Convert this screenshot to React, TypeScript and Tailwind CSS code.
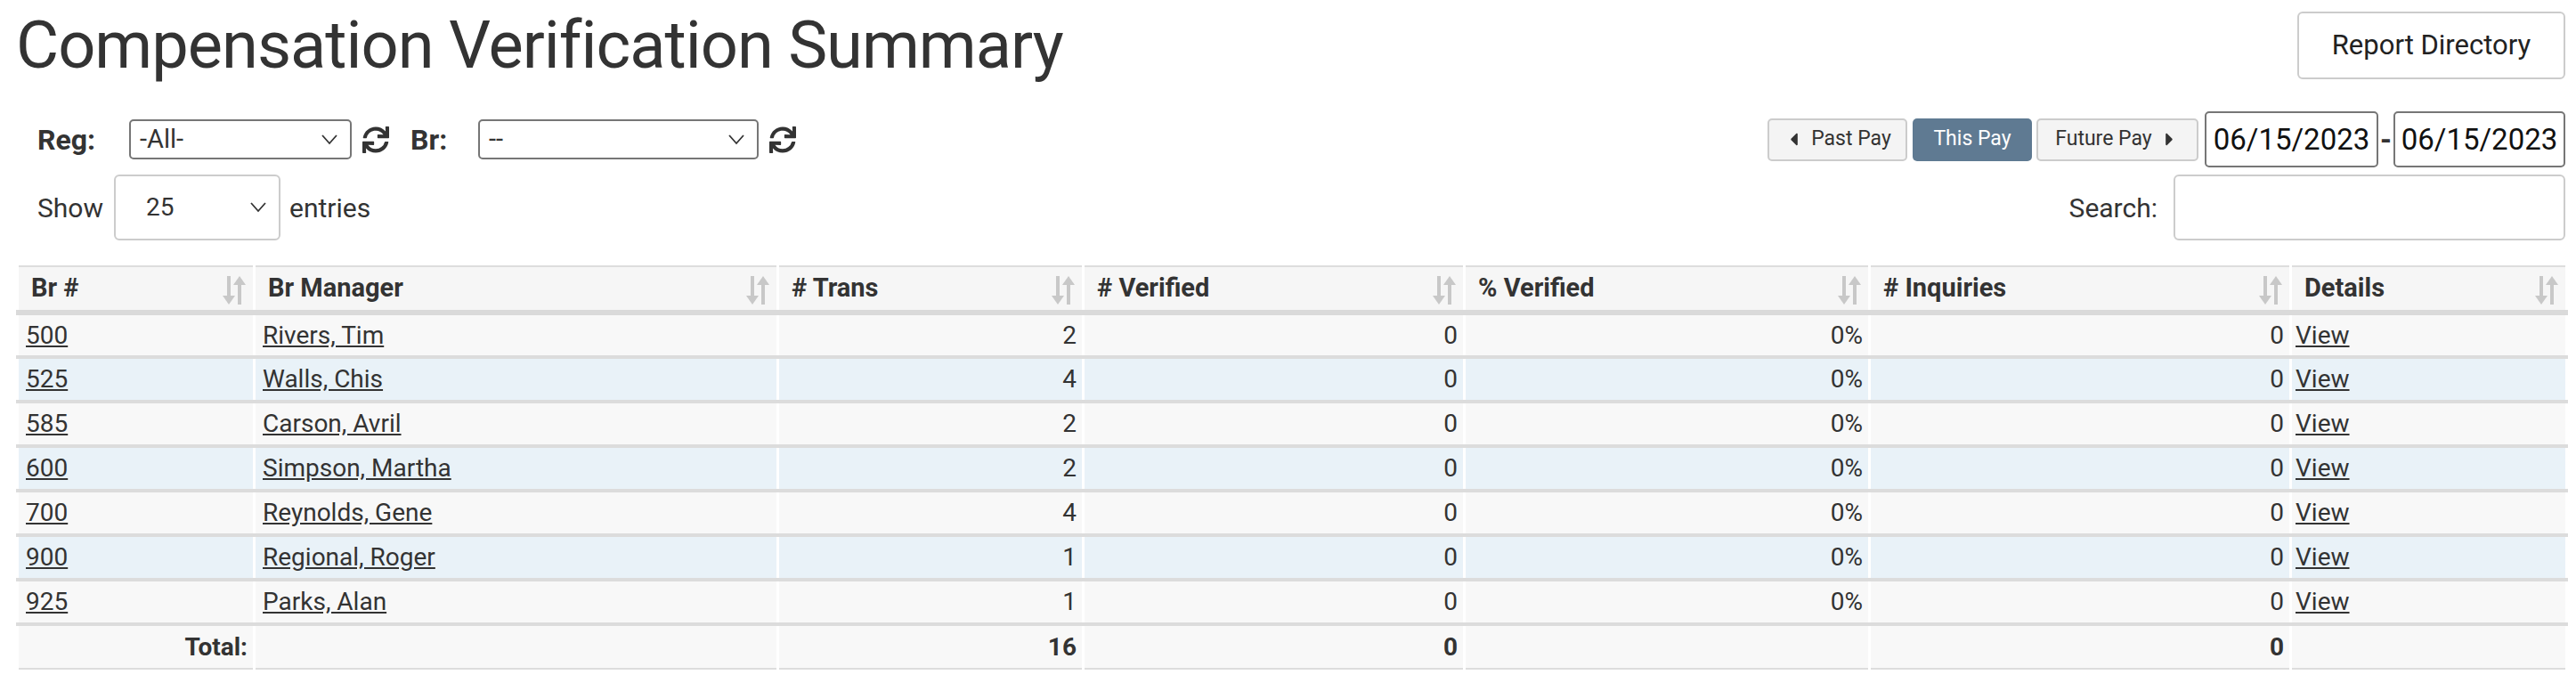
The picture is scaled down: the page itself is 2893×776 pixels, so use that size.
import React from "react";
import { FaSync, FaCaretLeft, FaCaretRight } from "react-icons/fa";

const rows = [
  ["500", "Rivers, Tim", "2"],
  ["525", "Walls, Chis", "4"],
  ["585", "Carson, Avril", "2"],
  ["600", "Simpson, Martha", "2"],
  ["700", "Reynolds, Gene", "4"],
  ["900", "Regional, Roger", "1"],
  ["925", "Parks, Alan", "1"],
];

const cols = [
  { t: "Br #", w: 266 },
  { t: "Br Manager", w: 588 },
  { t: "# Trans", w: 343 },
  { t: "# Verified", w: 428 },
  { t: "% Verified", w: 455 },
  { t: "# Inquiries", w: 473 },
  { t: "Details", w: 310 },
];

function SortIcon() {
  return (
    <svg width="26" height="36" viewBox="0 0 26 36" className="absolute right-[8px] top-[8px]">
      <g fill="#c8c8c8">
        <rect x="5" y="2" width="4" height="24" />
        <polygon points="0,24 14,24 7,34" />
        <rect x="17" y="10" width="4" height="24" />
        <polygon points="12,12 26,12 19,2" />
      </g>
    </svg>
  );
}

function Chevron() {
  return (
    <svg width="18" height="12" viewBox="0 0 18 12" className="absolute right-[14px] top-1/2 -translate-y-1/2">
      <path d="M1 1 L9 10 L17 1" fill="none" stroke="#333" strokeWidth="1.8" />
    </svg>
  );
}

export default function App() {
  const font = { fontFamily: "Roboto, 'Open Sans', sans-serif" };
  return (
    <div className="w-[2893px] h-[776px] bg-white text-[#333] overflow-hidden" style={font}>
      <div className="flex justify-between items-start">
        <h1 className="text-[74px] leading-none pl-[18px] pt-[14px] text-[#333] tracking-[-1px]">
          Compensation Verification Summary
        </h1>
        <button className="mt-[13px] mr-[12px] w-[301px] h-[76px] border-2 border-[#ccc] rounded-[6px] text-[31px] text-[#222] bg-white">
          Report Directory
        </button>
      </div>

      <div className="flex justify-between items-center mt-[36px] h-[63px]">
        <div className="flex items-center pl-[42px] text-[32px]">
          <span className="font-bold w-[103px]">Reg:</span>
          <div className="relative w-[250px] h-[45px] border-2 border-[#767676] rounded-[5px] flex items-center px-[10px] text-[29px]">
            -All-
            <Chevron />
          </div>
          <FaSync className="ml-[12px] text-[30px] text-[#333]" />
          <span className="font-bold ml-[24px] w-[76px]">Br:</span>
          <div className="relative w-[315px] h-[45px] border-2 border-[#767676] rounded-[5px] flex items-center px-[10px] text-[29px]">
            --
            <Chevron />
          </div>
          <FaSync className="ml-[12px] text-[30px] text-[#333]" />
        </div>
        <div className="flex items-center mr-[12px]">
          <button className="w-[157px] h-[48px] border-2 border-[#ccc] rounded-[5px] bg-[#f4f4f4] text-[23px] flex items-center justify-center gap-[8px] text-[#333]">
            <FaCaretLeft /> Past Pay
          </button>
          <button className="ml-[6px] w-[134px] h-[48px] rounded-[5px] bg-[#5f7a92] text-white text-[23px]">
            This Pay
          </button>
          <button className="ml-[5px] w-[182px] h-[48px] border-2 border-[#ccc] rounded-[5px] bg-[#f4f4f4] text-[23px] flex items-center justify-center gap-[8px] text-[#333]">
            Future Pay <FaCaretRight />
          </button>
          <div className="ml-[7px] w-[195px] h-[63px] border-2 border-[#767676] rounded-[5px] flex items-center justify-center text-[33px] text-[#111]">
            06/15/2023
          </div>
          <span className="text-[33px] font-bold mx-[2px]">-</span>
          <div className="w-[193px] h-[63px] border-2 border-[#767676] rounded-[5px] flex items-center justify-center text-[33px] text-[#111]">
            06/15/2023
          </div>
        </div>
      </div>

      <div className="flex justify-between items-center mt-[8px] h-[74px] text-[30px]">
        <div className="flex items-center pl-[42px]">
          <span>Show</span>
          <div className="relative ml-[12px] w-[187px] h-[74px] border-2 border-[#ccc] rounded-[6px] flex items-center pl-[34px] text-[28px]">
            25
            <Chevron />
          </div>
          <span className="ml-[10px]">entries</span>
        </div>
        <div className="flex items-center mr-[12px]">
          <span>Search:</span>
          <div className="ml-[18px] w-[440px] h-[74px] border-2 border-[#ccc] rounded-[6px]" />
        </div>
      </div>

      <table className="ml-[18px] mt-[28px] border-collapse border-2 border-[#ddd] text-[28px] table-fixed" style={{ width: 2863 }}>
        <colgroup>
          {cols.map((c) => (
            <col key={c.t} style={{ width: c.w }} />
          ))}
        </colgroup>
        <thead>
          <tr className="h-[52px] bg-[#f6f6f6]">
            {cols.map((c) => (
              <th key={c.t} className="relative text-left font-bold text-[29px] px-[14px] border-x-[3px] border-white border-b-[6px] border-b-[#dadada]">
                {c.t}
                <SortIcon />
              </th>
            ))}
          </tr>
        </thead>
        <tbody>
          {rows.map((r, i) => (
            <tr key={r[0]} className={`h-[50px] ${i % 2 ? "bg-[#e9f2f8]" : "bg-[#f8f8f8]"}`}>
              <td className="px-[8px] border-x-[3px] border-white border-b-[4px] border-b-[#dcdcdc]"><a className="underline">{r[0]}</a></td>
              <td className="px-[8px] border-x-[3px] border-white border-b-[4px] border-b-[#dcdcdc]"><a className="underline">{r[1]}</a></td>
              <td className="px-[6px] text-right border-x-[3px] border-white border-b-[4px] border-b-[#dcdcdc]">{r[2]}</td>
              <td className="px-[6px] text-right border-x-[3px] border-white border-b-[4px] border-b-[#dcdcdc]">0</td>
              <td className="px-[6px] text-right border-x-[3px] border-white border-b-[4px] border-b-[#dcdcdc]">0%</td>
              <td className="px-[6px] text-right border-x-[3px] border-white border-b-[4px] border-b-[#dcdcdc]">0</td>
              <td className="px-[4px] border-x-[3px] border-white border-b-[4px] border-b-[#dcdcdc]"><a className="underline">View</a></td>
            </tr>
          ))}
          <tr className="h-[50px] bg-[#f8f8f8] font-bold border-t-[4px] border-[#dcdcdc]">
            <td className="px-[6px] text-right border-x-[3px] border-white">Total:</td>
            <td className="border-x-[3px] border-white"></td>
            <td className="px-[6px] text-right border-x-[3px] border-white">16</td>
            <td className="px-[6px] text-right border-x-[3px] border-white">0</td>
            <td className="border-x-[3px] border-white"></td>
            <td className="px-[6px] text-right border-x-[3px] border-white">0</td>
            <td className="border-x-[3px] border-white"></td>
          </tr>
        </tbody>
      </table>
    </div>
  );
}
